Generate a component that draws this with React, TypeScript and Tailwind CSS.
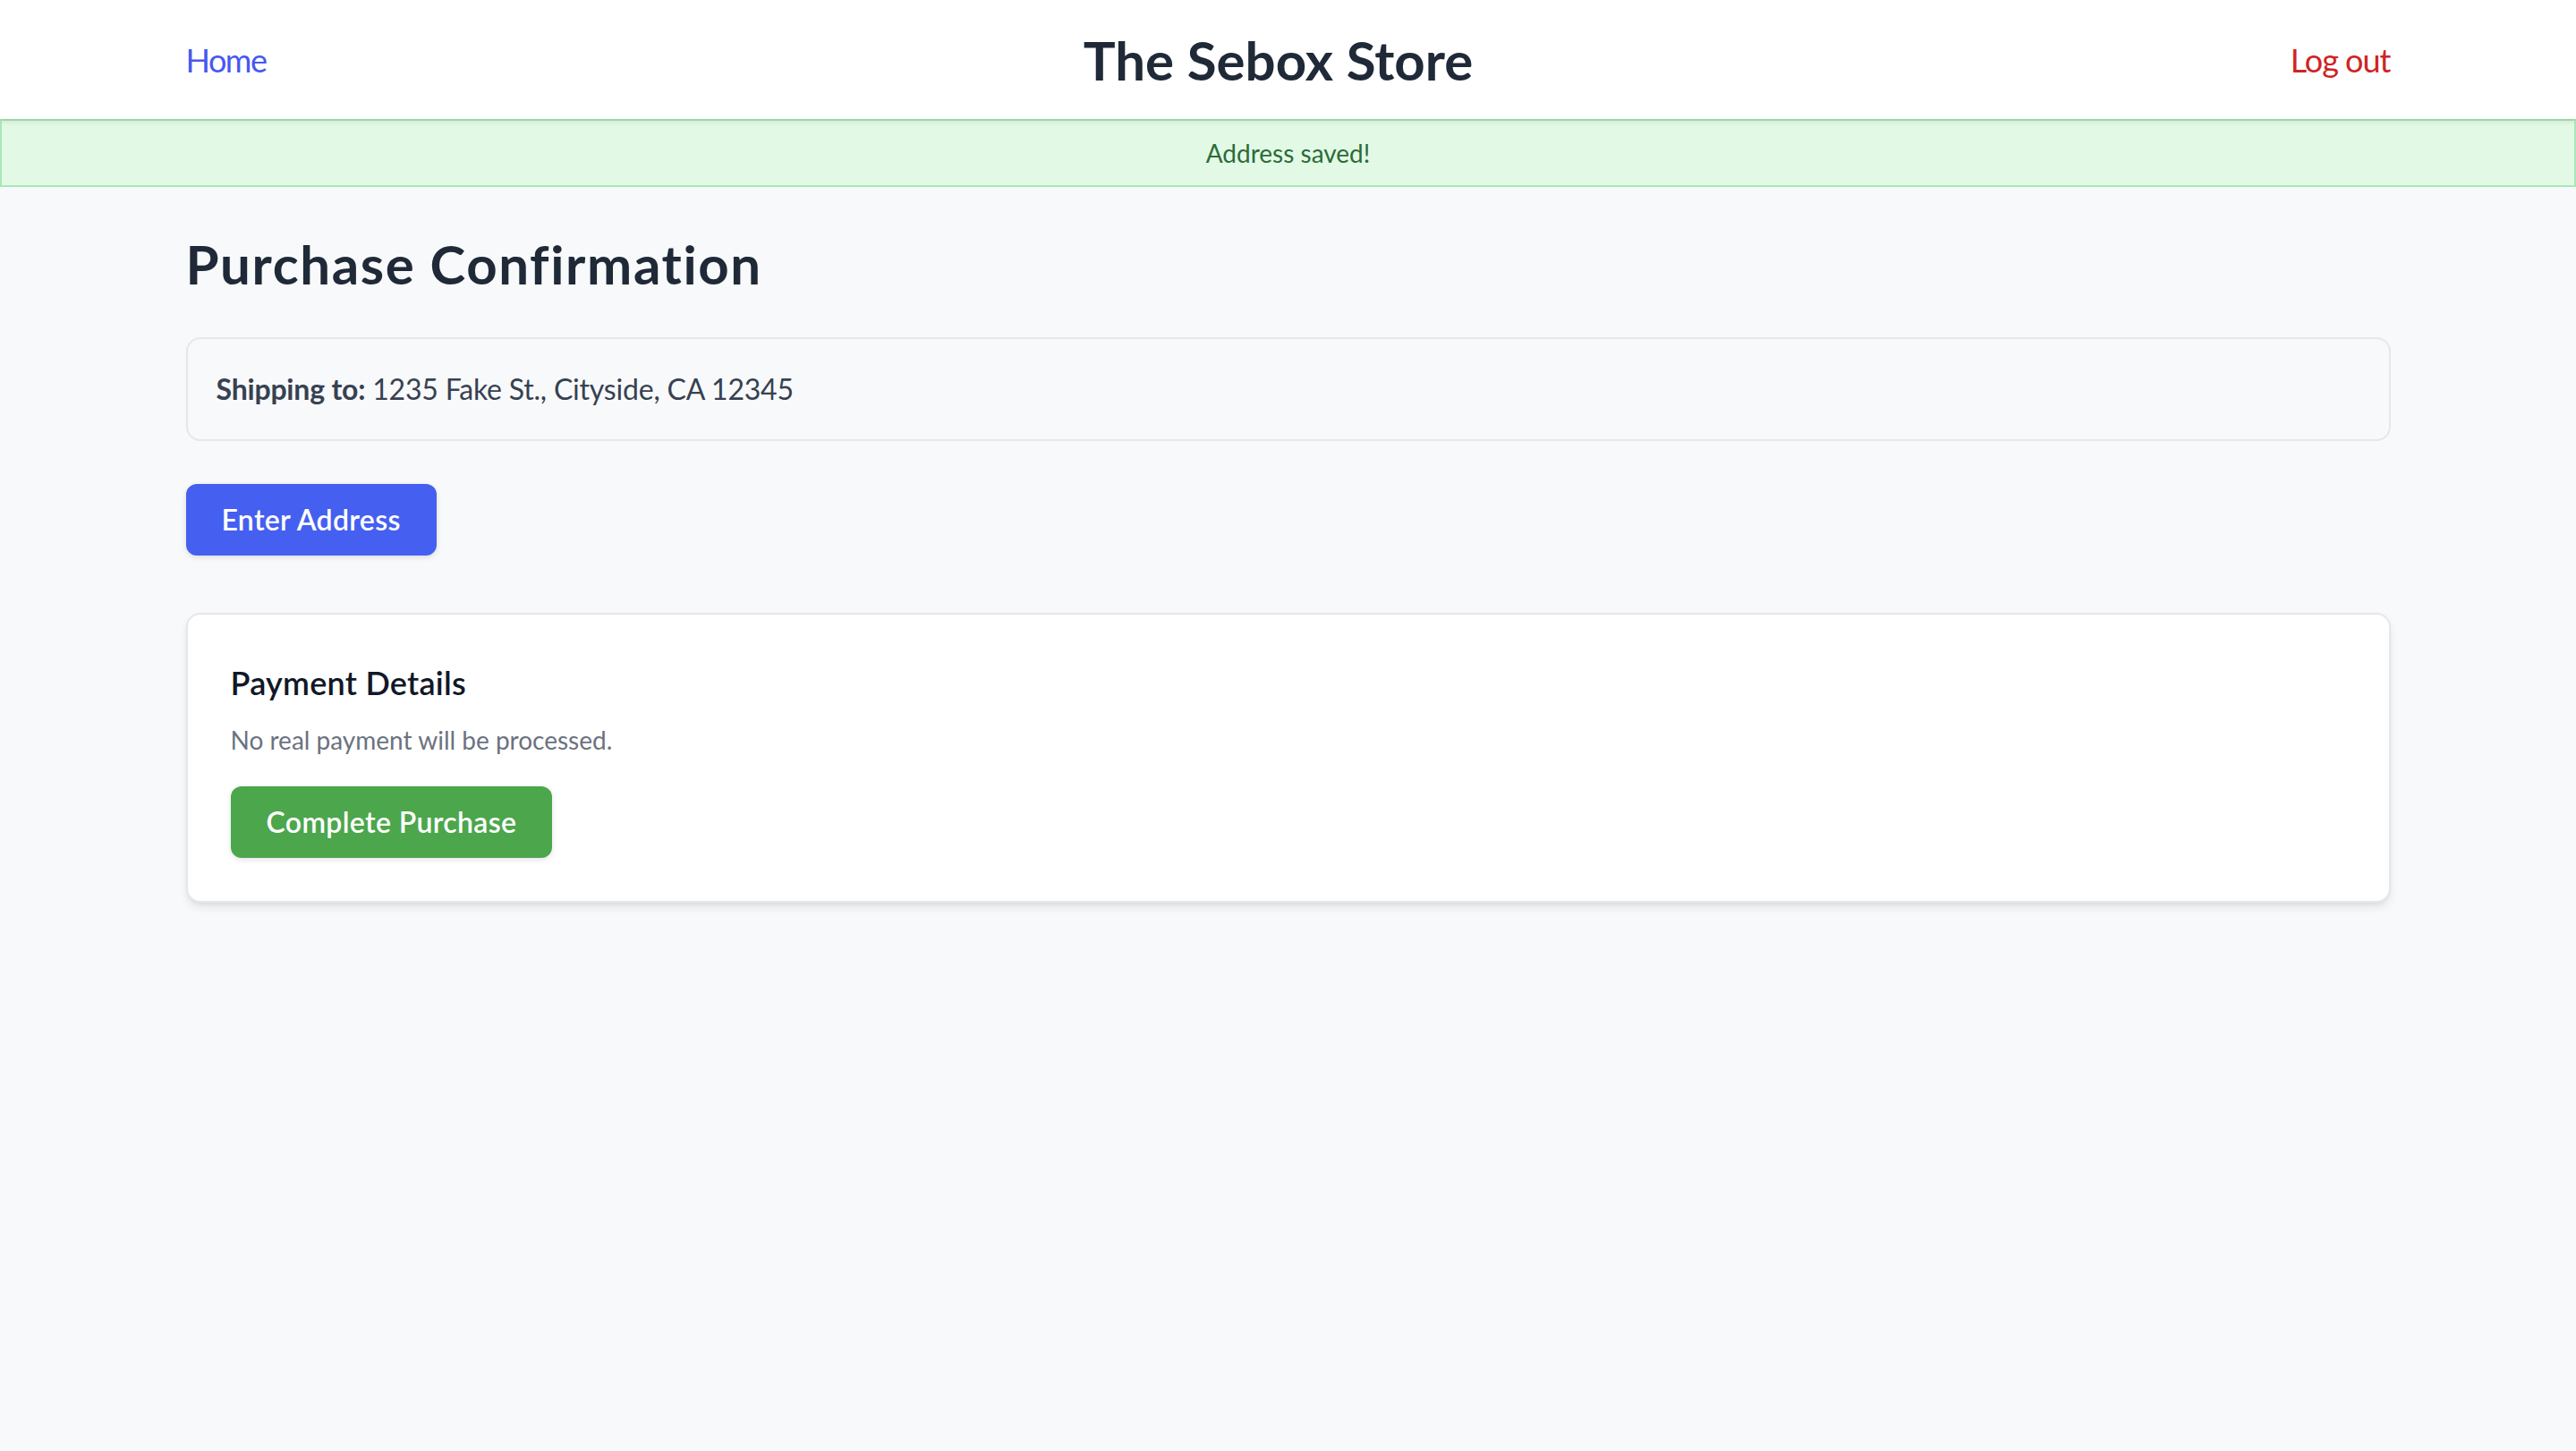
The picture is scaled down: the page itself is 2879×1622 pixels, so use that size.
import React from "react";

const font = { fontFamily: '"Lato", "Noto Sans", sans-serif' };

export default function App() {
  return (
    <div className="min-h-[1622px] bg-[#f8f9fa] font-['Lato','Noto_Sans',sans-serif]" style={font}>
      <header className="relative z-10 bg-white shadow-[0_2px_6px_rgba(0,0,0,0.12)]">
        <div className="mx-auto flex h-[133px] max-w-[2464px] items-center justify-between">
          <a className="text-[36px] leading-[56px] tracking-[-1.5px] text-[#4758f0]" href="#">
            Home
          </a>
          <h1 className="text-[60px] font-bold leading-[72px] text-[#1f2937]">The Sebox Store</h1>
          <a className="text-[36px] leading-[56px] tracking-[-1px] text-[#cf2424]" href="#">
            Log out
          </a>
        </div>
      </header>

      <div className="border-2 border-[#a7e9b5] bg-[#e2f9e5] py-[16px] text-center text-[28px] leading-[40px] text-[#2c6b3a]">
        Address saved!
      </div>

      <main className="mx-auto max-w-[2464px] pt-[50px] pb-[48px]">
        <h2 className="mb-[46px] text-[60px] font-bold leading-[72px] tracking-[1.6px] text-[#1f2937]">
          Purchase Confirmation
        </h2>

        <div className="mb-[48px] rounded-[16px] border-2 border-[#e5e7eb] p-[32px] text-[32px] leading-[48px] tracking-[-0.2px] text-[#374151]">
          <span className="font-bold">Shipping to:</span> 1235 Fake St., Cityside, CA 12345
        </div>

        <button className="mb-[64px] rounded-[12px] bg-[#455ff0] px-[40px] py-[16px] text-[32px] font-semibold leading-[48px] tracking-[0.3px] text-white shadow-[0_2px_6px_rgba(0,0,0,0.12)]">
          Enter Address
        </button>

        <section className="rounded-[16px] border-2 border-[#e5e7eb] bg-white p-[48px] shadow-[0_6px_12px_-2px_rgba(0,0,0,0.1),0_3px_6px_-3px_rgba(0,0,0,0.08)]">
          <h3 className="mb-[16px] text-[36px] font-semibold leading-[56px] tracking-[0.25px] text-[#111827]">Payment Details</h3>
          <p className="mb-[32px] text-[28px] leading-[40px] text-[#6b7280]">No real payment will be processed.</p>
          <button className="rounded-[12px] bg-[#4ca64c] px-[40px] py-[16px] text-[32px] font-semibold leading-[48px] tracking-[0.35px] text-white shadow-[0_2px_6px_rgba(0,0,0,0.12)]">
            Complete Purchase
          </button>
        </section>
      </main>
    </div>
  );
}
